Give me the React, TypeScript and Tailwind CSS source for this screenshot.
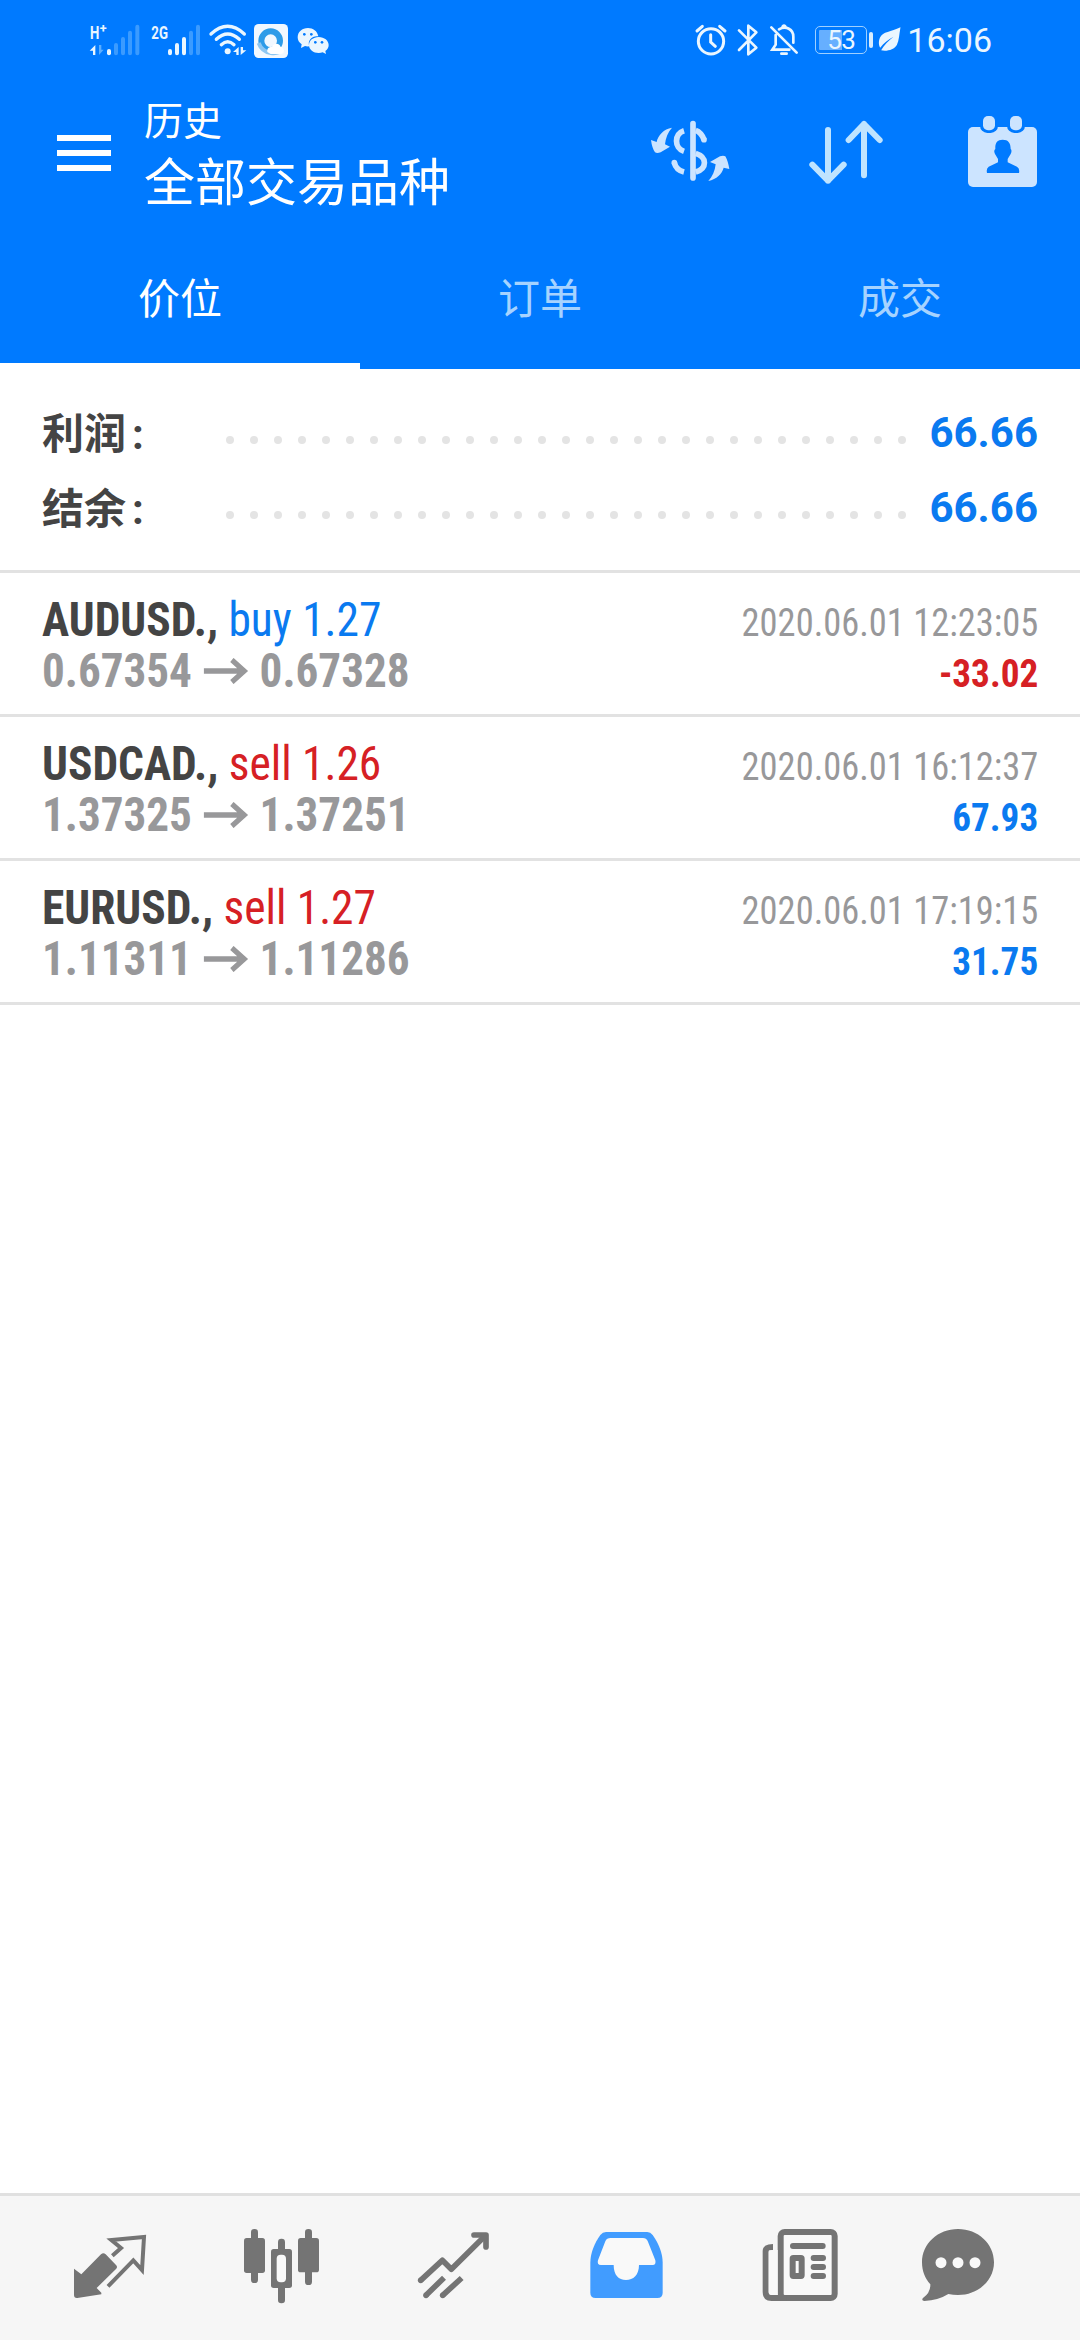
import { useState } from 'react';
import type { ReactNode } from 'react';

interface Trade {
  symbol: string;
  side: 'buy' | 'sell';
  volume: string;
  open: string;
  close: string;
  time: string;
  profit: string;
}

const trades: Trade[] = [
  { symbol: 'AUDUSD.', side: 'buy', volume: '1.27', open: '0.67354', close: '0.67328', time: '2020.06.01 12:23:05', profit: '-33.02' },
  { symbol: 'USDCAD.', side: 'sell', volume: '1.26', open: '1.37325', close: '1.37251', time: '2020.06.01 16:12:37', profit: '67.93' },
  { symbol: 'EURUSD.', side: 'sell', volume: '1.27', open: '1.11311', close: '1.11286', time: '2020.06.01 17:19:15', profit: '31.75' },
];

const tabs = ['价位', '订单', '成交'];

const summary = [
  { label: '利润', value: '66.66' },
  { label: '结余', value: '66.66' },
];

// Status icons are 60px high and drawn on a 3x grid
function StatusIcon({ x, width, className, children }: { x: number; width: string; className: string; children: ReactNode }) {
  return (
    <svg viewBox={`${x} 0 ${width} 180`} className={`h-[60px] shrink-0 ${className}`} fill="none">
      {children}
    </svg>
  );
}

function StatusBar() {
  return (
    <div className="flex h-20 items-center justify-between pr-[88px] pl-[70px] text-[#eaf6ff]">
      <div className="flex">
        <StatusIcon x={0} width="225" className="w-[75px]">
          <text x="60" y="87" fontSize="55" fontWeight="700" fill="currentColor" textLength="28" lengthAdjust="spacingAndGlyphs">H</text>
          <text x="89" y="69" fontSize="38" fontWeight="700" fill="currentColor">+</text>
          <path d="M59 122 76 105V135H69V122Z" fill="currentColor" />
          <path d="M87 105V135L101 119H94V105Z" fill="#5caeff" />
          <g strokeWidth="12" strokeLinecap="round">
            <path d="M117 123V130" stroke="currentColor" />
            <path d="M138 105V130M159 87V130M180 68V130M202 50V130" stroke="#3b9bff" />
          </g>
        </StatusIcon>
        <StatusIcon x={225} width="180" className="w-[60px]">
          <text x="244" y="87" fontSize="55" fontWeight="700" fill="currentColor" textLength="50" lengthAdjust="spacingAndGlyphs">2G</text>
          <g strokeWidth="12" strokeLinecap="round">
            <path d="M300 123V130M321 105V130M342 87V130" stroke="currentColor" />
            <path d="M363 68V130M384 50V130" stroke="#3b9bff" />
          </g>
        </StatusIcon>
        <StatusIcon x={405} width="135" className="w-[45px]">
          <g stroke="currentColor" strokeWidth="10" strokeLinecap="round">
            <path d="M423 72Q473 26 523 72" />
            <path d="M439 88Q473 56 508 88" />
            <path d="M454 104Q473 86 492 104" />
          </g>
          <circle cx="473" cy="124" r="9" fill="currentColor" />
          <path d="M489 126 506 111V135H499V126ZM512 111V135L529 121H519V111Z" fill="currentColor" />
        </StatusIcon>
        <StatusIcon x={540} width="126" className="w-[42px]">
          <rect x="552" y="42" width="102" height="102" rx="14" fill="#f1f8ff" />
          <circle cx="602" cy="92" r="28" stroke="#2d9be8" strokeWidth="18" />
          <path d="M566 99C580 137 625 134 638 118" stroke="#8cc6f2" strokeWidth="12" />
          <path d="M592 126C590 113 600 110 606 111C611 98 628 98 632 111C644 112 647 130 633 132H602Z" fill="#fff" />
        </StatusIcon>
        <StatusIcon x={666} width="144" className="w-[48px]">
          <path d="M714 54C696 54 683 66 683 82C683 91 687 98 695 103L693 114L705 108Q710 110 718 109C711 90 728 76 745 79C742 63 729 54 714 54Z" fill="currentColor" />
          <path d="M746 81C729 81 717 92 717 105C717 119 730 129 746 129Q753 129 758 127L768 132L766 123C773 118 776 112 776 105C776 92 763 81 746 81Z" fill="currentColor" />
          <g fill="#007aff">
            <circle cx="703" cy="73" r="4" />
            <circle cx="724" cy="73" r="4" />
            <circle cx="736" cy="97" r="4" />
            <circle cx="756" cy="97" r="4" />
          </g>
        </StatusIcon>
      </div>

      <div className="flex items-center">
        <StatusIcon x={0} width="150" className="w-[50px]">
          <g stroke="currentColor" strokeWidth="9" strokeLinecap="round">
            <circle cx="90" cy="94" r="38" />
            <path d="M89 74V96L103 109M48 63 64 49M116 49 132 63" />
          </g>
        </StatusIcon>
        <StatusIcon x={150} width="105" className="w-[35px]">
          <path d="M174 61 226 113 202 133V47L226 67 174 120" stroke="currentColor" strokeWidth="8" strokeLinecap="round" strokeLinejoin="round" />
        </StatusIcon>
        <StatusIcon x={255} width="120" className="w-[40px]">
          <g stroke="currentColor" strokeWidth="8" strokeLinecap="round">
            <path d="M271 52 347 128M284 75V104L274 119H325M294 58C315 46 337 58 337 80V98" />
            <path d="M301 131H317M305 49Q309 45 313 49" />
          </g>
        </StatusIcon>
        <div className="ml-[9px] flex h-[28px] w-[52px] items-center rounded-[5px] border-[1.5px] border-[#9fd0ff] bg-linear-to-r from-[#66afff] from-52% to-transparent to-52% bg-clip-content p-[3px]">
          <span className="w-full text-center text-[26px] leading-none tracking-[-0.5px]">53</span>
        </div>
        <div className="ml-[2px] h-4 w-1 rounded-sm bg-[#d8edff]" />
        <StatusIcon x={580} width="98" className="ml-px w-[33px]">
          <path d="M659 52C630 66 606 65 598 82C592 94 594 107 598 113C610 98 622 88 638 80C622 94 609 105 601 121C618 125 640 119 648 105C655 91 655 73 659 52Z" fill="currentColor" />
        </StatusIcon>
        <span className="text-[34px] leading-none">16:06</span>
      </div>
    </div>
  );
}

function Header() {
  return (
    <div className="flex h-[149px] items-start pt-[10px]">
      <button className="mt-[45px] ml-[57px] flex w-[54px] flex-col gap-[9px]">
        <span className="h-[6px] bg-white" />
        <span className="h-[6px] bg-white" />
        <span className="h-[6px] bg-white" />
      </button>
      <div className="ml-[33px] flex-1 text-white">
        <div className="mt-[4px] text-[39px] leading-[57px]">历史</div>
        <div className="text-[51px] leading-[66px]">全部交易品种</div>
      </div>
      <svg viewBox="0 0 450 360" className="h-[120px] w-[150px]" fill="none">
        <g stroke="#cce4ff" strokeWidth="17">
          <path d="M189 101V264" strokeLinecap="round" />
          <path d="M162 122C132 131 132 174 162 184M162 246Q138 240 133 218" />
          <path d="M197 121Q214 127 222 149" />
          <path d="M197 190C232 201 232 235 197 246" />
        </g>
        <circle cx="133" cy="218" r="8.500" fill="#cce4ff" />
        <circle cx="222" cy="149" r="8.500" fill="#cce4ff" />
        <path d="M126 113C101 117 84 136 80 156L63 150Q66 174 75 187Q81 191 92 187L120 170L105 163C107 144 114 126 126 113Z" fill="#cce4ff" />
        <path d="M235 273C260 267 276 252 281 233L298 237Q294 213 286 199Q280 196 270 199L240 216L257 223C255 243 247 260 235 273Z" fill="#cce4ff" />
      </svg>
      <svg viewBox="450 0 450 360" className="h-[120px] w-[150px]" fill="none" stroke="#bfe4ff" strokeWidth="18" strokeLinecap="round" strokeLinejoin="round">
        <path d="M594 120V272M547 224 594 272 641 224" />
        <path d="M702 256V102M656 150 702 102 749 150" />
      </svg>
      <svg viewBox="900 0 450 360" className="h-[120px] w-[150px]">
        <rect x="1014" y="111" width="207" height="180" rx="15" fill="#cce4ff" />
        <rect x="1050" y="69" width="54" height="60" rx="22" fill="#007aff" />
        <rect x="1131" y="69" width="54" height="60" rx="22" fill="#007aff" />
        <rect x="1059" y="78" width="36" height="43" rx="15" fill="#cce4ff" />
        <rect x="1140" y="78" width="36" height="43" rx="15" fill="#cce4ff" />
        <path d="M1118 149C1101 149 1095 159 1096 177Q1090 181 1095 192L1104 207V217L1076 230Q1068 236 1071 249H1167Q1170 236 1161 230L1133 217V207L1142 192Q1147 181 1142 177C1142 159 1135 149 1118 149Z" fill="#007aff" />
      </svg>
    </div>
  );
}

function TradeRow({ trade }: { trade: Trade }) {
  return (
    <div className="h-36 border-b-[3px] border-[#e2e2e2] px-[42px] pt-[21px] font-[Roboto_Condensed,Roboto,sans-serif] font-stretch-condensed">
      <div className="flex h-[51px] items-baseline justify-between leading-[51px]">
        <div className="origin-left scale-x-[0.946] text-[48px]">
          <span className="font-bold text-[#444]">{`${trade.symbol}, `}</span>
          <span className={trade.side === 'buy' ? 'text-[#0a7af0]' : 'text-[#d62024]'}>
            {`${trade.side} ${trade.volume}`}
          </span>
        </div>
        <div className="origin-right scale-x-[0.935] text-[39px] text-[#98989a]">{trade.time}</div>
      </div>
      <div className="flex h-[51px] items-baseline justify-between leading-[51px] font-bold">
        <div className="flex origin-left scale-x-[0.94] items-baseline text-[48px] text-[#98989a]">
          {trade.open}
          <svg viewBox="0 0 48 26" className="mx-[12px] h-[26px] w-[48px] self-center" fill="none" stroke="currentColor" strokeWidth="5.500">
            <path d="M0 13H44M30 2 43 13 30 24" />
          </svg>
          {trade.close}
        </div>
        <div className={`origin-right scale-x-[0.953] text-[39px] ${trade.profit.startsWith('-') ? 'text-[#d62024]' : 'text-[#0a7af0]'}`}>
          {trade.profit}
        </div>
      </div>
    </div>
  );
}

// Every bottom icon fills a 180x144 cell, drawn on a 3x grid
function NavIcon({ x, children }: { x: number; children: ReactNode }) {
  return (
    <button className="block">
      <svg viewBox={`${x} 48 540 432`} className="h-36 w-full" fill="none">
        {children}
      </svg>
    </button>
  );
}

function BottomNav() {
  return (
    <div className="grid h-[147px] grid-cols-6 border-t-[3px] border-[#e0e0e0] bg-[#f6f6f6] text-[#747474]">
      <NavIcon x={-120}>
        <path d="M217 227 243 204 214 180 312 171 306 270 280 241 204 319" stroke="currentColor" strokeWidth="12" />
        <path d="M102 266 124 283 183 223Q190 216 197 223L228 255Q234 261 228 267L170 324 184 338V343L112 354Q102 355 102 345Z" fill="currentColor" />
      </NavIcon>
      <NavIcon x={420}>
        <g fill="currentColor">
          <rect x="633" y="147" width="21" height="162" rx="10" />
          <rect x="612" y="174" width="63" height="105" rx="8" />
          <rect x="795" y="147" width="21" height="168" rx="10" />
          <rect x="774" y="174" width="63" height="103" rx="8" />
          <rect x="714" y="176" width="21" height="194" rx="10" />
          <rect x="693" y="207" width="63" height="117" rx="8" />
        </g>
        <rect x="710" y="224" width="28" height="83" rx="12" fill="#f9f9f9" />
      </NavIcon>
      <NavIcon x={-60}>
        <g stroke="currentColor" strokeWidth="17">
          <path d="M122 301 187 241 214 268 314 169" strokeLinejoin="round" />
          <path d="M138 346 192 293M188 346 245 294" />
          <path d="M282 165H318V201" strokeLinecap="round" strokeLinejoin="round" />
        </g>
        <path d="M300 165H318V183Z" fill="currentColor" />
        <circle cx="122" cy="301" r="8.500" fill="currentColor" />
        <circle cx="138" cy="346" r="8.500" fill="currentColor" />
        <circle cx="188" cy="346" r="8.500" fill="currentColor" />
      </NavIcon>
      <NavIcon x={480}>
        <path d="M678 156H802Q811 156 818 165C836 190 848 220 848 248V338Q848 354 832 354H647Q631 354 631 338V248C631 220 643 190 661 165Q668 156 678 156Z" fill="#419cff" />
        <path d="M692 174H789Q799 174 803 183L826 241Q829 255 818 255H777C777 285 760 300 738 300S701 285 701 255H663Q650 255 654 241L676 184Q680 174 692 174Z" fill="#f9f9f9" />
      </NavIcon>
      <NavIcon x={0}>
        <rect x="182" y="156" width="162" height="198" rx="12" fill="#f9f9f9" stroke="currentColor" strokeWidth="18" />
        <path d="M159 201Q137 201 137 213V336Q137 354 155 354H200" stroke="currentColor" strokeWidth="18" />
        <path d="M146 216Q146 210 159 210H173V345H155Q146 345 146 336Z" fill="#f9f9f9" />
        <path d="M219 198H308" stroke="currentColor" strokeWidth="18" strokeLinecap="round" />
        <path d="M281 234H309M281 261H309M281 288H309" stroke="currentColor" strokeWidth="18" strokeLinecap="round" />
        <rect x="218" y="234" width="27" height="54" rx="2" fill="#f9f9f9" stroke="currentColor" strokeWidth="18" strokeLinejoin="round" />
      </NavIcon>
      <NavIcon x={540}>
        <path d="M714 147C654 147 606 191 606 247C606 273 615 295 631 313Q632 338 609 354Q603 361 613 363Q655 361 685 342Q699 345 714 345C774 345 822 302 822 247C822 191 774 147 714 147Z" fill="currentColor" />
        <g fill="#f9f9f9">
          <circle cx="663" cy="248" r="16.500" />
          <circle cx="714" cy="248" r="16.500" />
          <circle cx="765" cy="248" r="16.500" />
        </g>
      </NavIcon>
    </div>
  );
}

export default function App() {
  const [activeTab, setActiveTab] = useState(0);

  return (
    <div className="flex h-[2340px] w-[1080px] flex-col overflow-hidden bg-white font-[Roboto,Noto_Sans_CJK_SC,sans-serif]">
      <div className="bg-[#007aff]">
        <StatusBar />
        <Header />
        <div className="grid h-[140px] grid-cols-3">
          {tabs.map((tab, i) => (
            <button
              key={tab}
              onClick={() => setActiveTab(i)}
              className={`border-b-[6px] pt-[7px] text-[42px] ${
                activeTab === i ? 'border-white text-white' : 'border-transparent text-[#a6d3ff]'
              }`}
            >
              {tab}
            </button>
          ))}
        </div>
      </div>

      <div className="border-b-[3px] border-[#e2e2e2] px-[42px] pt-[26px] pb-[25px] font-bold">
        {summary.map((item) => (
          <div key={item.label} className="flex h-[75px] items-center text-[42px]">
            <span className="mt-[3px] flex w-[184px] text-[#444]">
              <span>{item.label}</span>
              <span className="ml-[6px]">:</span>
            </span>
            <span className="mt-3.5 flex w-[680px] justify-between">
              {Array.from({ length: 29 }, (_, i) => (
                <span key={i} className="size-2 rounded-full bg-[#e4e4e4]" />
              ))}
            </span>
            <span className="flex-1 text-right text-[#0a7af0]">{item.value}</span>
          </div>
        ))}
      </div>

      <div className="flex-1">
        {trades.map((trade) => (
          <TradeRow key={trade.symbol} trade={trade} />
        ))}
      </div>

      <BottomNav />
    </div>
  );
}
